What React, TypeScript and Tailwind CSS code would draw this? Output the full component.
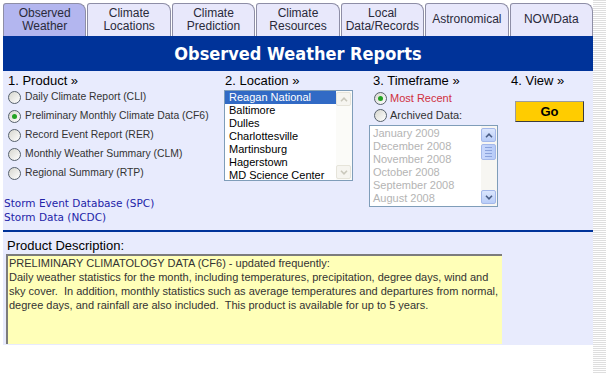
import React from 'react';

const tabs = [
    { label: ['Observed', 'Weather'], active: true },
    { label: ['Climate', 'Locations'] },
    { label: ['Climate', 'Prediction'] },
    { label: ['Climate', 'Resources'] },
    { label: ['Local', 'Data/Records'] },
    { label: ['Astronomical'] },
    { label: ['NOWData'] },
];

const products = [
    { name: 'Daily Climate Report (CLI)' },
    { name: 'Preliminary Monthly Climate Data (CF6)', checked: true },
    { name: 'Record Event Report (RER)' },
    { name: 'Monthly Weather Summary (CLM)' },
    { name: 'Regional Summary (RTP)' },
];

const locations = ['Reagan National', 'Baltimore', 'Dulles', 'Charlottesville', 'Martinsburg', 'Hagerstown', 'MD Science Center'];
const months = ['January 2009', 'December 2008', 'November 2008', 'October 2008', 'September 2008', 'August 2008'];

const Radio: React.FC<{ checked?: boolean }> = ({ checked }) => (
    <span className="flex h-[13px] w-[13px] shrink-0 items-center justify-center rounded-full border border-[#56606c] bg-[linear-gradient(135deg,#d6d6ce,#ffffff)]">
        {checked && <span className="h-[5px] w-[5px] rounded-full bg-[#22a322]" />}
    </span>
);

const Arrow: React.FC<{ up?: boolean; enabled?: boolean }> = ({ up, enabled }) => (
    <div
        className={
            enabled
                ? 'flex h-[14px] w-[15px] items-center justify-center rounded-[2px] border border-[#a4b8ea] bg-[linear-gradient(#dbe6fd,#b9cdf8)]'
                : 'flex h-[14px] w-[15px] items-center justify-center rounded-[2px] border border-[#e6e4da] bg-[#f6f5f0]'
        }
    >
        <svg width="8" height="5" viewBox="0 0 8 5">
            <path
                d={up ? 'M1 4.2 L4 1.2 L7 4.2' : 'M1 0.8 L4 3.8 L7 0.8'}
                stroke={enabled ? '#4a5e86' : '#cac8bc'}
                strokeWidth="1.6"
                fill="none"
            />
        </svg>
    </div>
);

const App: React.FC = () => {
    return (
        <div className="flex h-[373px] w-[606px] overflow-hidden bg-white font-['Liberation_Sans',Arial,sans-serif]">
            <div className="ml-[3px] flex w-[590px] flex-col">
                {/* tabs */}
                <div className="flex gap-[1px] pt-[3px]">
                    {tabs.map((t) => (
                        <div
                            key={t.label.join(' ')}
                            className={
                                t.active
                                    ? 'flex h-[33px] flex-1 flex-col items-center justify-center rounded-tl-[3px] rounded-tr-[8px] border border-b-0 border-[#8e8ea6] bg-[#b3b6ef] text-[12px] leading-[13.5px] text-[#2a2a3a]'
                                    : 'flex h-[33px] flex-1 flex-col items-center justify-center rounded-tl-[3px] rounded-tr-[8px] border border-b-0 border-[#8e8ea6] bg-[#e8e8fb] text-[12px] leading-[13.5px] text-[#2a2a3a]'
                            }
                        >
                            {t.label.map((l) => (
                                <span key={l}>{l}</span>
                            ))}
                        </div>
                    ))}
                </div>

                {/* title bar */}
                <div className="flex h-[35px] items-center justify-center bg-[#003399]">
                    <h1 className="font-['DejaVu_Sans_Condensed','DejaVu_Sans',sans-serif] text-[18px] font-bold text-white font-stretch-condensed">
                        Observed Weather Reports
                    </h1>
                </div>

                {/* body */}
                <div className="flex flex-col bg-[#e8ebfd] pb-[1px]">
                    <div className="flex items-start">
                        {/* product */}
                        <div className="flex w-[221px] flex-col pl-[1px] pt-[1.5px]">
                            <div className="ml-[4px] text-[13px] leading-[15px] text-black">1. Product »</div>
                            <div className="flex flex-col">
                                {products.map((p) => (
                                    <label key={p.name} className="ml-[4px] flex h-[19px] items-center gap-[4px] text-[10.4px] text-[#333]">
                                        <Radio checked={p.checked} />
                                        {p.name}
                                    </label>
                                ))}
                            </div>
                            <div className="mt-[13px] flex flex-col font-['DejaVu_Sans',sans-serif] text-[10.5px] leading-[14px] text-[#2323a8]">
                                <a href="#">Storm Event Database (SPC)</a>
                                <a href="#">Storm Data (NCDC)</a>
                            </div>
                        </div>

                        {/* location */}
                        <div className="flex w-[145px] flex-col pt-[1.5px]">
                            <div className="ml-[1px] text-[13px] leading-[15px] text-black">2. Location »</div>
                            <div className="mt-[2.5px] flex h-[91px] w-[129px] border border-[#7f9db9] bg-white">
                                <div className="flex flex-1 flex-col overflow-hidden">
                                    {locations.map((l, i) => (
                                        <div
                                            key={l}
                                            className={
                                                i === 0
                                                    ? 'h-[13px] shrink-0 bg-[#316ac5] pl-[4px] text-[11px] leading-[13px] text-white'
                                                    : 'h-[13px] shrink-0 pl-[4px] text-[11px] leading-[13px] text-black'
                                            }
                                        >
                                            {l}
                                        </div>
                                    ))}
                                </div>
                                <div className="flex w-[16px] flex-col justify-between bg-[#fbfbf8] py-[1px] pr-[1px]">
                                    <Arrow up />
                                    <Arrow />
                                </div>
                            </div>
                        </div>

                        {/* timeframe */}
                        <div className="flex w-[141px] flex-col pt-[1.5px]">
                            <div className="ml-[4px] text-[13px] leading-[15px] text-black">3. Timeframe »</div>
                            <div className="ml-[5px] mt-[2px] flex h-[17px] items-center gap-[3px] text-[11px] text-[#d0303e]">
                                <Radio checked />
                                Most Recent
                            </div>
                            <div className="ml-[5px] flex h-[17px] items-center gap-[3px] text-[11px] text-[#333]">
                                <Radio />
                                Archived Data:
                            </div>
                            <div className="mt-[1.5px] flex h-[82px] w-[129px] border border-[#7f9db9] bg-white">
                                <div className="flex flex-1 flex-col pt-[1px]">
                                    {months.map((m) => (
                                        <div key={m} className="h-[13px] pl-[3px] text-[11px] leading-[13px] text-[#b4b4b4]">
                                            {m}
                                        </div>
                                    ))}
                                </div>
                                <div className="flex w-[16px] flex-col bg-[#f7f6f2] py-[2px] pr-[1px]">
                                    <Arrow up enabled />
                                    <div className="mt-[2px] flex h-[16px] w-[15px] flex-col items-center justify-center gap-[2px] rounded-[2px] border border-[#a4b8ea] bg-[linear-gradient(90deg,#c9d8fc,#b7cbf7)]">
                                        <span className="h-[1px] w-[7px] bg-[#8aa2dc]" />
                                        <span className="h-[1px] w-[7px] bg-[#8aa2dc]" />
                                        <span className="h-[1px] w-[7px] bg-[#8aa2dc]" />
                                        <span className="h-[1px] w-[7px] bg-[#8aa2dc]" />
                                    </div>
                                    <div className="flex-1" />
                                    <Arrow enabled />
                                </div>
                            </div>
                        </div>

                        {/* view */}
                        <div className="flex flex-1 flex-col pt-[1.5px]">
                            <div className="ml-[1px] text-[13px] leading-[15px] text-black">4. View »</div>
                            <button className="ml-[5px] mt-[13.5px] h-[21px] w-[69px] border border-b-[#3c3c3c] border-l-[#9c9c9c] border-r-[#3c3c3c] border-t-[#9c9c9c] bg-[#ffcc00] text-[13px] font-bold text-black">
                                Go
                            </button>
                        </div>
                    </div>

                    <div className="mt-[6px] h-[2px] bg-[#003399]" />

                    <div className="ml-[4px] mt-[6px] text-[13px] leading-[15px] text-black">Product Description:</div>
                    <div className="ml-[3px] mt-[1px] h-[90px] w-[496px] border-2 border-b-0 border-r-0 border-[#7c7c7c] bg-[#ffffb8] pl-[1px] text-[11px] leading-[14px] whitespace-pre text-[#333]">
                        PRELIMINARY CLIMATOLOGY DATA (CF6) - updated frequently:
                        <br />
                        Daily weather statistics for the month, including temperatures, precipitation, degree days, wind and
                        <br />
                        sky cover.  In addition, monthly statistics such as average temperatures and departures from normal,
                        <br />
                        degree days, and rainfall are also included.  This product is available for up to 5 years.
                    </div>
                </div>
            </div>
            <div className="h-full w-[13px] bg-[image:repeating-linear-gradient(to_bottom,#dedede_0px,#dedede_1px,#ffffff_1px,#ffffff_2px)]" />
        </div>
    );
};

export default App;
